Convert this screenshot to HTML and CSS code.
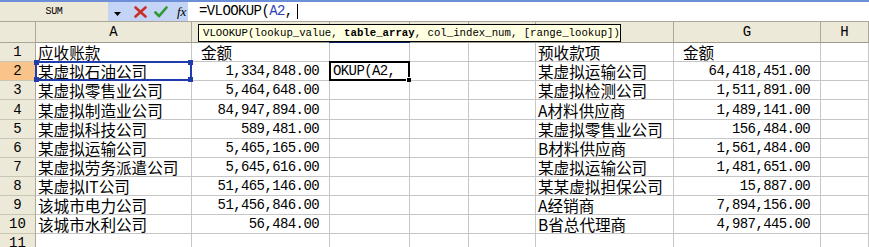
FILE: index.html
```html
<!DOCTYPE html>
<html>
<head>
<meta charset="utf-8">
<link rel="stylesheet" href="styles.css">
</head>
<body>
<div class="app">
  <div class="fbar">
    <div class="namebox">SUM</div>
    <div class="tools">
      <svg class="drop" width="7" height="4" viewBox="0 0 7 4"><path d="M0 0H7L3.5 4Z" fill="#000"/></svg>
      <svg class="cancel" width="13" height="12" viewBox="0 0 13 12"><path d="M1.5 1.5L11.5 10.5M11.5 1.5L1.5 10.5" stroke="#C8312A" stroke-width="2.6" stroke-linecap="round"/></svg>
      <svg class="enter" width="14" height="12" viewBox="0 0 14 12"><path d="M1.5 6.5L5 10.2L12.5 1.5" fill="none" stroke="#2F9A2F" stroke-width="2.6" stroke-linecap="round" stroke-linejoin="round"/></svg>
      <span class="fx">fx</span>
    </div>
    <div class="formula">=VLOOKUP(<span class="ref">A2</span>,<span class="caret"></span></div>
  </div>
  <div class="sheet">
    <div class="grid">
      <div class="corner"></div>
      <div class="ch">A</div><div class="ch"></div><div class="ch"></div><div class="ch"></div><div class="ch"></div><div class="ch"></div><div class="ch">G</div><div class="ch">H</div>

      <div class="rh">1</div>
      <div class="c t">应收账款</div><div class="c t ind">金额</div><div class="c"></div><div class="c"></div><div class="c"></div><div class="c t">预收款项</div><div class="c t ind">金额</div><div class="c"></div>

      <div class="rh act">2</div>
      <div class="c t">某虚拟石油公司</div><div class="c num">1,334,848.00</div><div class="c edit">OKUP(A2,</div><div class="c"></div><div class="c"></div><div class="c t">某虚拟运输公司</div><div class="c num">64,418,451.00</div><div class="c"></div>

      <div class="rh">3</div>
      <div class="c t">某虚拟零售业公司</div><div class="c num">5,464,648.00</div><div class="c"></div><div class="c"></div><div class="c"></div><div class="c t">某虚拟检测公司</div><div class="c num">1,511,891.00</div><div class="c"></div>

      <div class="rh">4</div>
      <div class="c t">某虚拟制造业公司</div><div class="c num">84,947,894.00</div><div class="c"></div><div class="c"></div><div class="c"></div><div class="c t">A材料供应商</div><div class="c num">1,489,141.00</div><div class="c"></div>

      <div class="rh">5</div>
      <div class="c t">某虚拟科技公司</div><div class="c num">589,481.00</div><div class="c"></div><div class="c"></div><div class="c"></div><div class="c t">某虚拟零售业公司</div><div class="c num">156,484.00</div><div class="c"></div>

      <div class="rh">6</div>
      <div class="c t">某虚拟运输公司</div><div class="c num">5,465,165.00</div><div class="c"></div><div class="c"></div><div class="c"></div><div class="c t">B材料供应商</div><div class="c num">1,561,484.00</div><div class="c"></div>

      <div class="rh">7</div>
      <div class="c t">某虚拟劳务派遣公司</div><div class="c num">5,645,616.00</div><div class="c"></div><div class="c"></div><div class="c"></div><div class="c t">某虚拟运输公司</div><div class="c num">1,481,651.00</div><div class="c"></div>

      <div class="rh">8</div>
      <div class="c t">某虚拟IT公司</div><div class="c num">51,465,146.00</div><div class="c"></div><div class="c"></div><div class="c"></div><div class="c t">某某虚拟担保公司</div><div class="c num">15,887.00</div><div class="c"></div>

      <div class="rh">9</div>
      <div class="c t">该城市电力公司</div><div class="c num">51,456,846.00</div><div class="c"></div><div class="c"></div><div class="c"></div><div class="c t">A经销商</div><div class="c num">7,894,156.00</div><div class="c"></div>

      <div class="rh">10</div>
      <div class="c t">该城市水利公司</div><div class="c num">56,484.00</div><div class="c"></div><div class="c"></div><div class="c"></div><div class="c t">B省总代理商</div><div class="c num">4,987,445.00</div><div class="c"></div>

      <div class="rh">11</div>
      <div class="c"></div><div class="c"></div><div class="c"></div><div class="c"></div><div class="c"></div><div class="c"></div><div class="c"></div><div class="c"></div>
    </div>
    <div class="colmark"></div>
    <div class="tip">VLOOKUP(lookup_value, <b>table_array</b>, col_index_num, [range_lookup])</div>
    <div class="selbox">
      <span class="h tl"></span><span class="h tr"></span><span class="h bl"></span><span class="h br"></span>
    </div>
    <div class="editbox"><span class="fill"></span></div>
  </div>
</div>
</body>
</html>
```

FILE: styles.css
```css
html, body {
  margin: 0;
  padding: 0;
  background: #fff;
}
body {
  width: 869px;
  height: 247px;
  overflow: hidden;
}
.app {
  width: 869px;
}
.fbar {
  display: flex;
  height: 22px;
  box-sizing: border-box;
  border-top: 2px solid #6C8FD8;
  border-bottom: 1px solid #ACA899;
  background: #fff;
}
.namebox {
  width: 108px;
  background: #ECE9D8;
  font-family: "Liberation Mono", monospace;
  font-size: 10px;
  line-height: 19px;
  text-align: center;
  color: #000;
  letter-spacing: -0.3px;
}
.tools {
  width: 80px;
  background: #C3D4F7;
  position: relative;
  display: flex;
  align-items: center;
}
.tools .drop { margin-left: 6px; margin-top: 4px; }
.tools .cancel { margin-left: 13px; }
.tools .enter { margin-left: 7px; }
.tools .fx {
  margin-left: 9px;
  font-family: "Liberation Serif", serif;
  font-style: italic;
  font-size: 13px;
  color: #000;
  margin-top: 1px;
}
.formula {
  flex: 1;
  padding-left: 11px;
  font-family: "Liberation Mono", monospace;
  font-size: 14px;
  letter-spacing: -0.6px;
  line-height: 19px;
  color: #000;
  display: flex;
  align-items: center;
}
.formula .ref { color: #2B3FB8; }
.caret {
  display: inline-block;
  width: 1px;
  height: 15px;
  background: #000;
  margin-left: 4px;
}

.sheet {
  position: relative;
}
.grid {
  display: grid;
  grid-template-columns: 36px 156px 138px 80px 59px 67px 138px 147px 1fr;
  grid-template-rows: 21px 19px 19px 19px 20px 19px 19px 19px 19px 19px 19px 19px;
}
.grid > div {
  box-sizing: border-box;
  white-space: nowrap;
  display: flex;
  align-items: center;
  min-width: 0;
}
.corner {
  background: #ECE9D8;
  border-right: 1px solid #ACA899;
  border-bottom: 1px solid #ACA899;
}
.ch {
  background: #ECE9D8;
  border-right: 1px solid #ACA899;
  border-bottom: 1px solid #9D9A8C;
  justify-content: center;
  font-family: "Liberation Mono", monospace;
  font-size: 14px;
  color: #000;
}
.rh {
  background: #ECE9D8;
  border-right: 1px solid #ACA899;
  border-bottom: 1px solid #C9C6B6;
  justify-content: center;
  font-family: "Liberation Mono", monospace;
  font-size: 14px;
  color: #000;
}
.rh.act {
  background: #F8C48A;
}
.c {
  border-right: 1px solid #C6C6C6;
  border-bottom: 1px solid #C6C6C6;
  color: #000;
  overflow: visible;
}
.t {
  font-family: "Noto Sans CJK SC", "Liberation Sans", sans-serif;
  font-size: 15.6px;
  padding-left: 2px;
  line-height: 18px;
}
.ind {
  padding-left: 9px;
}
.num {
  justify-content: flex-end;
  padding-right: 10px;
  font-family: "Liberation Mono", monospace;
  font-size: 14px;
  letter-spacing: -0.6px;
}
.edit {
  padding-left: 3px;
  font-family: "Liberation Mono", monospace;
  font-size: 14px;
  letter-spacing: -0.6px;
}

.colmark {
  position: absolute;
  left: 329px;
  top: 19px;
  width: 81px;
  height: 2px;
  background: #0A246A;
}
.tip {
  position: absolute;
  left: 198px;
  top: 2px;
  width: 423px;
  height: 18px;
  box-sizing: border-box;
  background: #FFFFE1;
  border: 1px solid #000;
  font-family: "Liberation Mono", monospace;
  font-size: 10.7px;
  line-height: 16px;
  padding-left: 4px;
  white-space: nowrap;
  color: #000;
}
.tip b {
  font-weight: bold;
}
.selbox {
  position: absolute;
  left: 35px;
  top: 39px;
  width: 157px;
  height: 20px;
  box-sizing: border-box;
  border: 2px solid #1F3CAE;
}
.selbox .h {
  position: absolute;
  width: 5px;
  height: 5px;
  background: #1F3CAE;
}
.selbox .tl { left: -3px; top: -3px; }
.selbox .tr { right: -3px; top: -3px; }
.selbox .bl { left: -3px; bottom: -3px; }
.selbox .br { right: -3px; bottom: -3px; }
.editbox {
  position: absolute;
  left: 329px;
  top: 39px;
  width: 81px;
  height: 20px;
  box-sizing: border-box;
  border: 2px solid #000;
}
.editbox .fill {
  position: absolute;
  right: -3px;
  bottom: -3px;
  width: 4px;
  height: 4px;
  background: #000;
  border-left: 1px solid #fff;
  border-top: 1px solid #fff;
}
```
